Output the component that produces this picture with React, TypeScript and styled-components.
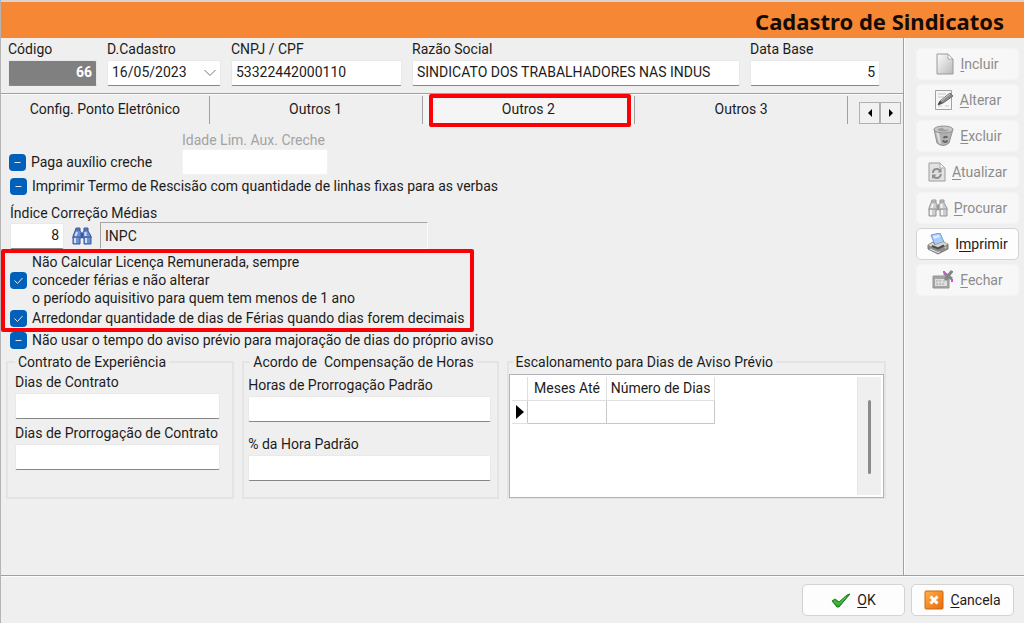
import React, { useState } from 'react';
import styled, { createGlobalStyle, css } from 'styled-components';

const GlobalStyle = createGlobalStyle`
  * { box-sizing: border-box; }
  body { margin: 0; background: #efefef; }
  body, button, input, select, table {
    font-family: Roboto, "Liberation Sans", Arial, sans-serif;
    font-size: 14px;
    line-height: 18px;
    color: #1c1c1c;
  }
`;

const Window = styled.div`
  display: flex;
  flex-direction: column;
  min-height: 100vh;
  background: #efefef;
  border-left: 1px solid #b4b4b4;
`;

const TitleBar = styled.header`
  display: flex;
  align-items: center;
  justify-content: flex-end;
  height: 38px;
  padding: 2px 20px 0 0;
  border-top: 2px solid #d8d4d0;
  background: #f68735;
`;

const Title = styled.h1`
  margin: 0;
  font: bold 22px/28px "Noto Sans", "Open Sans", sans-serif;
  color: #140c04;
`;

const Body = styled.div`
  display: grid;
  grid-template-columns: minmax(0, 1fr) 121px;
  flex: 1;
`;

const Main = styled.main`
  display: flex;
  flex-direction: column;
`;

const Sidebar = styled.aside`
  display: flex;
  flex-direction: column;
  gap: 4px;
  padding: 10px 5px 0 12px;
  border-left: 1px solid #a0a0a0;
  box-shadow: inset 1px 0 #fcfcfc;
`;

const Footer = styled.footer`
  display: flex;
  justify-content: flex-end;
  gap: 6px;
  height: 48px;
  padding: 8px 10px 0;
  border-top: 1px solid #a0a0a0;
  box-shadow: inset 0 1px #fcfcfc;
`;

const Button = styled.button`
  display: flex;
  align-items: center;
  justify-content: center;
  gap: 6px;
  width: 103px;
  height: 32px;
  padding: 0;
  border: 1px solid #d2d2d2;
  border-radius: 5px;
  background: #fdfdfd;
  &:disabled {
    border-color: #f4f4f4;
    background: #f7f7f7;
    color: #8c8c8c;
  }
  u { text-underline-offset: 2px; }
`;

const HeaderFields = styled.div`
  display: grid;
  grid-template-columns: 89px 114px 171px minmax(0, 1fr) 130px;
  gap: 10px;
  padding: 2px 23px 7px 7px;
`;

const FieldBox = styled.div<{ $gap?: number }>`
  display: flex;
  flex-direction: column;
  gap: ${p => p.$gap ?? 2}px;
  min-width: 0;
`;

const Label = styled.label<{ $muted?: boolean }>`
  white-space: nowrap;
  ${p => p.$muted && css`color: #a3a3a3;`}
`;

const control = css`
  width: 100%;
  height: 26px;
  padding: 0 4px 2px;
  border: 1px solid #e9e9e9;
  border-bottom-color: #868686;
  border-radius: 2px;
  outline: none;
  background: #fff;
`;

const TextInput = styled.input<{ $right?: boolean; $key?: boolean }>`
  ${control}
  text-align: ${p => (p.$right ? 'right' : 'left')};
  ${p => p.$key && css`
    background: #808080;
    color: #fff;
    font-weight: bold;
  `}
  &:disabled { border-color: #f2f2f2; }
`;

const SelectWrap = styled.div`
  display: grid;
  align-items: center;
  > * { grid-area: 1 / 1; }
  > svg { justify-self: end; margin-right: 4px; pointer-events: none; }
`;

const Select = styled.select`
  ${control}
  appearance: none;
`;

const TabBar = styled.div`
  display: grid;
  grid-template-columns: minmax(0, 209fr) repeat(3, minmax(0, 213fr)) 55px;
  height: 32px;
  border-top: 1px solid #a0a0a0;
  box-shadow: inset 0 1px #fcfcfc;
`;

const Tab = styled.button<{ $active?: boolean }>`
  position: relative;
  height: 28px;
  margin-top: 2px;
  padding: 0 0 2px;
  border: 0;
  border-right: 1px solid #a0a0a0;
  background: ${p => (p.$active ? '#f5f5f5' : 'transparent')};
`;

const Highlight = styled.span`
  position: absolute;
  pointer-events: none;
  border: 4px solid #fb0007;
  border-radius: 2px;
`;

const TabHighlight = styled(Highlight)`
  inset: -2px 3px -3px 6px;
`;

const TabScroll = styled.div`
  display: flex;
  justify-content: flex-end;
  padding: 8px 2px 0 0;
`;

const ScrollButton = styled.button`
  display: grid;
  place-items: center;
  width: 21px;
  height: 22px;
  padding: 0;
  border: 1px solid #b0b0b0;
  background: #f1f1f1;
`;

const Panel = styled.section`
  padding: 6px 0 0;
`;

const CrecheRow = styled.div`
  display: grid;
  grid-template-columns: 173px 146px;
  align-items: end;
  padding-left: 8px;
`;

const CheckRow = styled.div<{ $tall?: boolean }>`
  display: flex;
  align-items: center;
  gap: 5px;
  min-height: ${p => (p.$tall ? 26 : 22)}px;
`;

const Checks = styled.div`
  padding-left: 9px;
`;

const CheckLabel = styled.label`
  white-space: pre-line;
`;

const Tick = styled.span`
  display: grid;
  width: 17px;
  height: 17px;
  > * { grid-area: 1 / 1; }
  > svg { pointer-events: none; }
`;

const TickInput = styled.input`
  appearance: none;
  width: 17px;
  height: 17px;
  margin: 0;
  border-radius: 4px;
  background: #0060ba;
`;

const IndexBlock = styled.div`
  padding: 7px 0 0 9px;
`;

const IndexRow = styled.div`
  display: flex;
  align-items: center;
  gap: 6px;
`;

const IndexInput = styled(TextInput)`
  width: 54px;
`;

const IconButton = styled.button`
  display: grid;
  place-items: center;
  width: 24px;
  height: 26px;
  padding: 0;
  border: 0;
  background: none;
`;

const IndexName = styled.output`
  flex: 0 1 328px;
  height: 27px;
  padding: 4px;
  border: 1px solid #fafafa;
  border-top-color: #a6a6a6;
  border-left-color: #a6a6a6;
`;

const HighlightedChecks = styled.div`
  position: relative;
  width: 474px;
  padding: 4px 0 0 9px;
`;

const ChecksHighlight = styled(Highlight)`
  inset: 0 1px -3px 0;
`;

const Groups = styled.div`
  display: grid;
  grid-template-columns: minmax(0, 228fr) minmax(0, 256fr) minmax(0, 379fr);
  gap: 8px;
  padding: 2px 17px 0 5px;
`;

const Group = styled.fieldset<{ $top: number; $side: number }>`
  min-width: 0;
  height: 146px;
  margin: 0;
  padding: ${p => p.$top}px ${p => p.$side}px 0;
  border: 2px solid #e4e4e4;
`;

const Legend = styled.legend<{ $start: number }>`
  margin-left: ${p => p.$start}px;
  padding: 0 3px;
  white-space: pre;
`;

const Stack = styled.div<{ $gap: number; $end: number }>`
  display: flex;
  flex-direction: column;
  gap: ${p => p.$gap}px;
  padding-right: ${p => p.$end}px;
`;

const GridPanel = styled.div`
  display: flex;
  justify-content: space-between;
  height: 124px;
  padding: 2px;
  border: 1px solid #b2b2b8;
  background: #fff;
`;

const DataTable = styled.table`
  border-collapse: collapse;
  align-self: flex-start;
  th, td {
    height: 23px;
    padding: 0;
    border: 1px solid #c8c8c8;
    font-weight: normal;
    white-space: nowrap;
  }
  th { border-top: 0; border-color: #e0e0e0; }
  th:first-child, td:first-child { width: 16px; border-left: 0; }
  td:first-child { border-bottom-color: #e0e0e0; }
  td:first-child svg { display: block; margin-left: 4px; }
  th:nth-child(2) { width: 79px; }
  th:nth-child(3) { width: 108px; }
`;

const ScrollTrack = styled.div`
  width: 24px;
  padding-top: 23px;
  border-left: 1px solid #e4e4e4;
  background: #efefef;
`;

const ScrollThumb = styled.div`
  width: 3px;
  height: 74px;
  margin-left: 10px;
  border-radius: 2px;
  background: #8b8b8b;
`;

function PageIcon() {
  return (
    <svg width="18" height="22" viewBox="0 0 18 22">
      <defs>
        <linearGradient id="page" x1="0" y1="0" x2="1" y2="1">
          <stop offset="0" stopColor="#fdfdfd" /><stop offset="1" stopColor="#b9b9b9" />
        </linearGradient>
      </defs>
      <path d="M1 1H12L17 6V21H1Z" fill="url(#page)" stroke="#9a9a9a" />
      <path d="M12 1V6H17Z" fill="#fff" stroke="#a8a8a8" />
    </svg>
  );
}

function EditIcon() {
  return (
    <svg width="20" height="22" viewBox="0 0 20 22">
      <path d="M1.500 1.500H17.500V20.500H1.500Z" fill="#f6f6f6" stroke="#a2a2a2" />
      <path d="M4 5H12M4 8H10M4 14H7M11 17H15M4 17H8" stroke="#c8c8c8" />
      <path d="M4 16L6 12L16 4L19 7L9 14Z" fill="#8c8c8c" stroke="#6a6a6a" />
      <path d="M7 12L16 5" stroke="#cfcfcf" />
      <path d="M4 16L6 12L8 14Z" fill="#404040" />
    </svg>
  );
}

function TrashIcon() {
  return (
    <svg width="21" height="22" viewBox="0 0 21 22">
      <path d="M1 4L4 18Q10 23 16 18L20 4Z" fill="#b2b2b2" stroke="#929292" />
      <path d="M3 7L6 18L8 19L6 8Z" fill="#dedede" />
      <ellipse cx="10.500" cy="4.500" rx="9.500" ry="3.500" fill="#c9c9c9" stroke="#929292" />
      <path d="M4 4.500L9 2.500L12 5L16 4L14 6.500H7Z" fill="#a0a0a0" />
      <path d="M10.500 13Q12 11 14.500 12.500M14.500 15.500Q13 18 10.500 16.500V15" fill="none" stroke="#666" strokeWidth="2" />
    </svg>
  );
}

function RefreshIcon() {
  return (
    <svg width="18" height="20" viewBox="0 0 18 20">
      <path d="M1 1H12L17 6V19H1Z" fill="#e2e2e2" stroke="#9c9c9c" />
      <path d="M12 1V6H17Z" fill="#fff" stroke="#a8a8a8" />
      <path d="M5 11Q5 7 9 7Q11 7 12 8.500M13 12Q12 16 9 16Q6 16 5 14" fill="none" stroke="#8e8e8e" strokeWidth="2" />
      <path d="M13.500 6V10.500H9.500ZM4 17V12.500H8.500Z" fill="#8e8e8e" />
    </svg>
  );
}

function BinocularsIcon({ colour }: { colour?: boolean }) {
  const line = colour ? '#3559a2' : '#969696';
  const fill = colour ? '#6e90cc' : '#cdcdcd';
  const light = colour ? '#d3e0f6' : '#f4f4f4';
  return (
    <svg width="20" height="18" viewBox="0 0 20 18">
      <path d="M4 1H8V4L9.500 6V11H1V9L3 4ZM12 1H16V4L19 9V11H10.500V6L12 4Z" fill={fill} stroke={line} />
      <path d="M8.500 6H11.500V10H8.500Z" fill={line} />
      <path d="M1 10H8V17H1ZM12 10H19V17H12Z" fill={fill} stroke={line} />
      <path d="M3 11V16M14 11V16M5 5L3.500 9M13.500 5V9" stroke={light} strokeWidth="2" />
      <path d="M4 3H8M12 3H16" stroke={line} />
    </svg>
  );
}

function PrinterIcon() {
  return (
    <svg width="22" height="22" viewBox="0 0 22 22">
      <path d="M4 2L13 0L17 9L8 12Z" fill="#a9cbfa" stroke="#6f9be0" />
      <path d="M6 3L12 2L13 4L7 6Z" fill="#dcebff" />
      <path d="M1 12L6 9L8 12L16 9L21 11L21 16L11 21L1 16Z" fill="#8d8d8d" stroke="#7a7a7a" />
      <path d="M1 12L6 9.500L8 12L16 9L21 11L11 16Z" fill="#d5d5d5" />
      <path d="M5 13L11 15.500L17 12.500" fill="none" stroke="#4c4c4c" strokeWidth="2" />
      <path d="M3 16L11 19.500L13 18.500" fill="none" stroke="#ededed" />
      <circle cx="18.500" cy="14.500" r="1" fill="#e2d35a" />
    </svg>
  );
}

function CloseFormIcon() {
  return (
    <svg width="22" height="20" viewBox="0 0 22 20">
      <path d="M1 6H17V18H1Z" fill="#a4a4a4" stroke="#949494" />
      <path d="M3 9H15V16H3Z" fill="#dedede" />
      <path d="M4 11H9M4 14H12M11 11H14" stroke="#a2a2a2" strokeDasharray="2 1" />
      <path d="M12 3L20 9M20 1L13 10" stroke="#858585" strokeWidth="3" />
      <path d="M11 1H13V3H11ZM19 1H21V2H19ZM19 9H21V12H19ZM14 9H16V10H14Z" fill="#f03cf0" />
    </svg>
  );
}

function OkIcon() {
  return (
    <svg width="20" height="15" viewBox="0 0 20 15">
      <path d="M1 8L4 6L8 9L16 2L19 1L8 14H6Z" fill="#2fa52c" stroke="#1d7d1d" strokeLinejoin="round" />
      <path d="M3 8L7.500 11L15 4" fill="none" stroke="#62c95c" />
    </svg>
  );
}

function CancelIcon() {
  return (
    <svg width="20" height="20" viewBox="0 0 20 20">
      <defs>
        <linearGradient id="cancel" x1="0" y1="0" x2="1" y2="1">
          <stop offset="0" stopColor="#ffb04a" /><stop offset="1" stopColor="#ea6a08" />
        </linearGradient>
      </defs>
      <rect x="1" y="1" width="18" height="18" rx="1" fill="url(#cancel)" stroke="#cf6710" />
      <path d="M6.500 6.500L13.500 13.500M13.500 6.500L6.500 13.500" stroke="#fff" strokeWidth="3" />
    </svg>
  );
}

function Arrow({ left }: { left?: boolean }) {
  return (
    <svg width="8" height="8" viewBox="0 0 8 8">
      <path d={left ? 'M6 0V8L2 4Z' : 'M2 0V8L6 4Z'} fill="#000" />
    </svg>
  );
}

function RowMarker() {
  return (
    <svg width="8" height="14" viewBox="0 0 8 14">
      <path d="M0 0V14L8 7Z" fill="#000" />
    </svg>
  );
}

type FieldProps = {
  id: string; label: string; value?: string; right?: boolean; emphasised?: boolean; disabled?: boolean; gap?: number;
};

function Field({ id, label, value = '', right, emphasised, disabled, gap }: FieldProps) {
  return (
    <FieldBox $gap={gap}>
      <Label htmlFor={id} $muted={disabled}>{label}</Label>
      <TextInput id={id} defaultValue={value} $right={right} $key={emphasised} disabled={disabled} />
    </FieldBox>
  );
}

function Check({ id, label, initial, tall }: { id: string; label: string; initial?: boolean; tall?: boolean }) {
  const [checked, setChecked] = useState<boolean | undefined>(initial);
  return (
    <CheckRow $tall={tall}>
      <Tick>
        <TickInput
          id={id}
          type="checkbox"
          checked={checked ?? false}
          ref={el => { if (el) el.indeterminate = checked === undefined; }}
          onChange={e => setChecked(e.target.checked)}
        />
        <svg width="17" height="17" viewBox="0 0 17 17" fill="none" stroke="#dcebfa">
          {checked === undefined && <path d="M5.500 8.500H11.500" />}
          {checked && <path d="M4.500 8.500L7.500 11.500L12.500 6" />}
        </svg>
      </Tick>
      <CheckLabel htmlFor={id}>{label}</CheckLabel>
    </CheckRow>
  );
}

const actions = [
  { key: 'I', rest: 'ncluir', icon: <PageIcon /> },
  { key: 'A', rest: 'lterar', icon: <EditIcon /> },
  { key: 'E', rest: 'xcluir', icon: <TrashIcon /> },
  { key: 'A', rest: 'tualizar', icon: <RefreshIcon /> },
  { key: 'P', rest: 'rocurar', icon: <BinocularsIcon /> },
  { lead: 'I', key: 'm', rest: 'primir', icon: <PrinterIcon />, enabled: true },
  { key: 'F', rest: 'echar', icon: <CloseFormIcon /> },
];

export default function App() {
  return (
    <>
      <GlobalStyle />
      <Window>
        <TitleBar><Title>Cadastro de Sindicatos</Title></TitleBar>
        <Body>
          <Main>
            <HeaderFields>
              <Field id="codigo" label="Código" value="66" right emphasised />
              <FieldBox>
                <Label htmlFor="cadastro">D.Cadastro</Label>
                <SelectWrap>
                  <Select id="cadastro"><option>16/05/2023</option></Select>
                  <svg width="14" height="8" viewBox="0 0 14 8" fill="none" stroke="#777">
                    <path d="M1.500 1L7 6.500L12.500 1" />
                  </svg>
                </SelectWrap>
              </FieldBox>
              <Field id="cnpj" label="CNPJ / CPF" value="53322442000110" />
              <Field id="razao" label="Razão Social" value="SINDICATO DOS TRABALHADORES NAS INDUS" />
              <Field id="database" label="Data Base" value="5" right />
            </HeaderFields>
            <TabBar>
              <Tab>Config. Ponto Eletrônico</Tab>
              <Tab>Outros 1</Tab>
              <Tab $active>Outros 2<TabHighlight /></Tab>
              <Tab>Outros 3</Tab>
              <TabScroll>
                <ScrollButton aria-label="Anterior"><Arrow left /></ScrollButton>
                <ScrollButton aria-label="Próxima"><Arrow /></ScrollButton>
              </TabScroll>
            </TabBar>
            <Panel>
              <CrecheRow>
                <Check id="creche" label="Paga auxílio creche" tall />
                <Field id="idade" label="Idade Lim. Aux. Creche" disabled gap={0} />
              </CrecheRow>
              <Checks>
                <Check id="termo" label="Imprimir Termo de Rescisão com quantidade de linhas fixas para as verbas" />
              </Checks>
              <IndexBlock>
                <Label htmlFor="indice">Índice Correção Médias</Label>
                <IndexRow>
                  <IndexInput id="indice" defaultValue="8" $right />
                  <IconButton aria-label="Procurar índice"><BinocularsIcon colour /></IconButton>
                  <IndexName>INPC</IndexName>
                </IndexRow>
              </IndexBlock>
              <HighlightedChecks>
                <Check
                  id="licenca"
                  initial
                  label={'Não Calcular Licença Remunerada, sempre\nconceder férias e não alterar\no período aquisitivo para quem tem menos de 1 ano'}
                />
                <Check id="arredondar" initial label="Arredondar quantidade de dias de Férias quando dias forem decimais" />
                <ChecksHighlight />
              </HighlightedChecks>
              <Checks>
                <Check id="aviso" label="Não usar o tempo do aviso prévio para majoração de dias do próprio aviso" />
              </Checks>
              <Groups>
                <Group $top={2} $side={7}>
                  <Legend $start={0}>Contrato de Experiência</Legend>
                  <Stack $gap={5} $end={5}>
                    <Field id="dias" label="Dias de Contrato" />
                    <Field id="prorrogacao" label="Dias de Prorrogação de Contrato" />
                  </Stack>
                </Group>
                <Group $top={5} $side={4}>
                  <Legend $start={2}>{'Acordo de  Compensação de Horas'}</Legend>
                  <Stack $gap={13} $end={2}>
                    <Field id="horas" label="Horas de Prorrogação Padrão" />
                    <Field id="percentual" label="% da Hora Padrão" />
                  </Stack>
                </Group>
                <Group $top={3} $side={0}>
                  <Legend $start={4}>Escalonamento para Dias de Aviso Prévio</Legend>
                  <GridPanel>
                    <DataTable>
                      <thead>
                        <tr><th /><th>Meses Até</th><th>Número de Dias</th></tr>
                      </thead>
                      <tbody>
                        <tr><td><RowMarker /></td><td /><td /></tr>
                      </tbody>
                    </DataTable>
                    <ScrollTrack><ScrollThumb /></ScrollTrack>
                  </GridPanel>
                </Group>
              </Groups>
            </Panel>
          </Main>
          <Sidebar>
            {actions.map(a => (
              <Button key={a.key + a.rest} disabled={!a.enabled}>
                {a.icon}
                <span>{a.lead}<u>{a.key}</u>{a.rest}</span>
              </Button>
            ))}
          </Sidebar>
        </Body>
        <Footer>
          <Button><OkIcon /><span><u>O</u>K</span></Button>
          <Button><CancelIcon /><span><u>C</u>ancela</span></Button>
        </Footer>
      </Window>
    </>
  );
}
